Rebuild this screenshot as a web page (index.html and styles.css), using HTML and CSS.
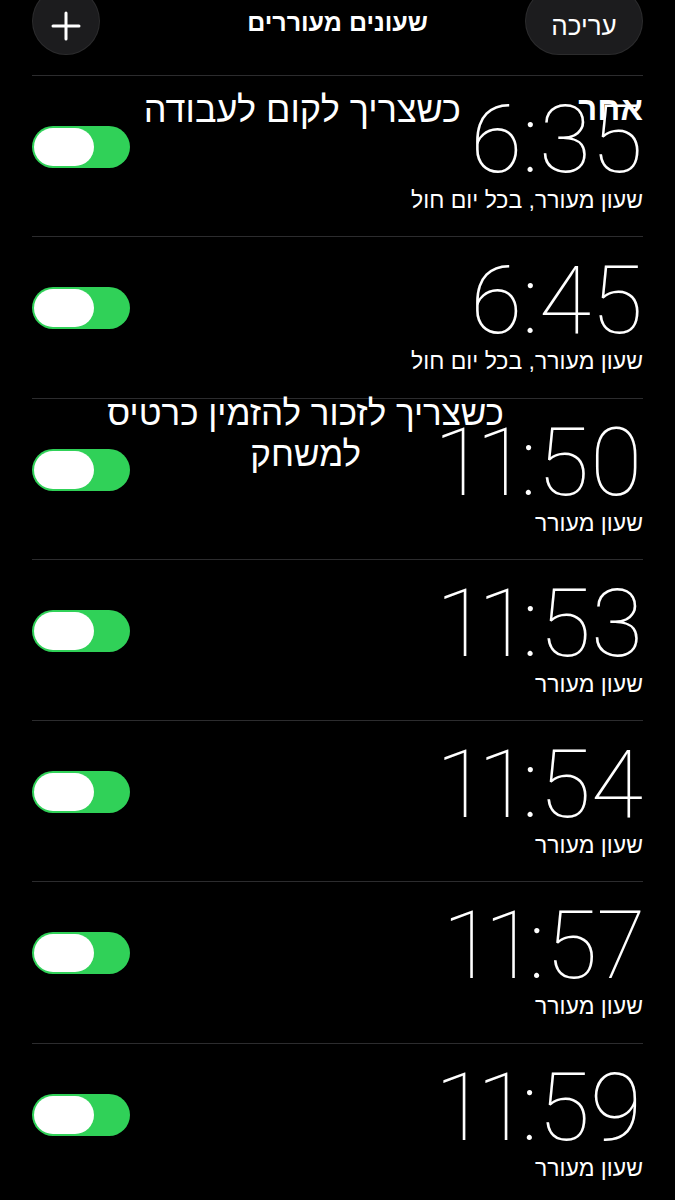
FILE: index.html
```html
<!DOCTYPE html>
<html lang="he" dir="rtl">
<head>
  <meta charset="UTF-8">
  <meta name="viewport" content="width=device-width, initial-scale=1">
  <title>שעונים מעוררים</title>
  <link rel="stylesheet" href="styles.css">
</head>
<body>

<header class="topbar">
  <button class="pill-btn edit-btn">עריכה</button>
  <h1 class="title">שעונים מעוררים</h1>
  <button class="pill-btn add-btn" aria-label="הוסף">
    <svg width="30" height="30" viewBox="0 0 30 30">
      <path d="M15 2 V28 M2 15 H28" stroke="#fff" stroke-width="3" stroke-linecap="round" fill="none"/>
    </svg>
  </button>
</header>

<ul class="alarms">
  <li class="alarm">
    <div class="info">
      <div class="time">6:35</div>
      <div class="label">שעון מעורר, בכל יום חול</div>
    </div>
    <span class="toggle on"><span class="knob"></span></span>
    <!-- הערות שנכתבו מעל צילום המסך -->
    <span class="note note-work">כשצריך לקום לעבודה</span>
    <span class="note note-other">אחר</span>
  </li>
  <li class="alarm">
    <div class="info">
      <div class="time">6:45</div>
      <div class="label">שעון מעורר, בכל יום חול</div>
    </div>
    <span class="toggle on"><span class="knob"></span></span>
  </li>
  <li class="alarm">
    <div class="info">
      <div class="time">11:50</div>
      <div class="label">שעון מעורר</div>
    </div>
    <span class="toggle on"><span class="knob"></span></span>
    <span class="note note-ticket">כשצריך לזכור להזמין כרטיס<br>למשחק</span>
  </li>
  <li class="alarm">
    <div class="info">
      <div class="time">11:53</div>
      <div class="label">שעון מעורר</div>
    </div>
    <span class="toggle on"><span class="knob"></span></span>
  </li>
  <li class="alarm">
    <div class="info">
      <div class="time">11:54</div>
      <div class="label">שעון מעורר</div>
    </div>
    <span class="toggle on"><span class="knob"></span></span>
  </li>
  <li class="alarm">
    <div class="info">
      <div class="time">11:57</div>
      <div class="label">שעון מעורר</div>
    </div>
    <span class="toggle on"><span class="knob"></span></span>
  </li>
  <li class="alarm">
    <div class="info">
      <div class="time">11:59</div>
      <div class="label">שעון מעורר</div>
    </div>
    <span class="toggle on"><span class="knob"></span></span>
  </li>
</ul>

</body>
</html>
```

FILE: styles.css
```css
html, body {
  margin: 0;
  padding: 0;
  background: #000;
  color: #fff;
  font-family: "Liberation Sans", "DejaVu Sans", sans-serif;
  overflow: hidden;
}
.topbar {
  height: 75px;
  padding: 0 32px;
  display: grid;
  grid-template-columns: 1fr auto 1fr;
  align-items: start;
}
.pill-btn {
  margin-top: -13px;
  height: 68px;
  border-radius: 34px;
  border: 1px solid rgba(255,255,255,0.07);
  background: #1c1c1e;
  color: #fff;
  font-family: inherit;
  display: flex;
  align-items: center;
  justify-content: center;
  padding: 10px 0 0;
}
.edit-btn {
  width: 118px;
  font-size: 26px;
  justify-self: start;
}
.add-btn {
  width: 68px;
  justify-self: end;
}
.title {
  margin: 0;
  padding-top: 8px;
  font-size: 25px;
  font-weight: bold;
}
.alarms {
  list-style: none;
  margin: 0;
  padding: 0;
}
.alarm {
  position: relative;
  height: 161.3px;
  box-sizing: border-box;
  margin: 0 32px;
  border-top: 1px solid #2c2c2e;
  display: flex;
  justify-content: space-between;
  align-items: flex-start;
}
.time {
  padding-top: 16px;
  font-family: Roboto, "DejaVu Sans", sans-serif;
  font-weight: 100;
  font-size: 95px;
  line-height: 1;
  direction: ltr;
  text-align: right;
  font-variant-numeric: proportional-nums;
}
.label {
  font-size: 23px;
  line-height: 1.2;
}
.toggle {
  margin-top: 50px;
  width: 98px;
  height: 42px;
  border-radius: 21px;
  background: #30d158;
  position: relative;
  flex-shrink: 0;
}
.knob {
  position: absolute;
  left: 2px;
  top: 2px;
  width: 60px;
  height: 38px;
  border-radius: 19px;
  background: #fff;
}
.note {
  position: absolute;
  color: #fff;
  font-size: 36px;
  line-height: 41px;
  white-space: nowrap;
}
.note-work {
  top: 13px;
  right: 182px;
}
.note-other {
  top: 12px;
  right: 0;
  font-weight: bold;
  font-size: 33px;
}
.note-ticket {
  top: -7px;
  right: 139px;
  font-size: 35px;
  text-align: center;
}
```
